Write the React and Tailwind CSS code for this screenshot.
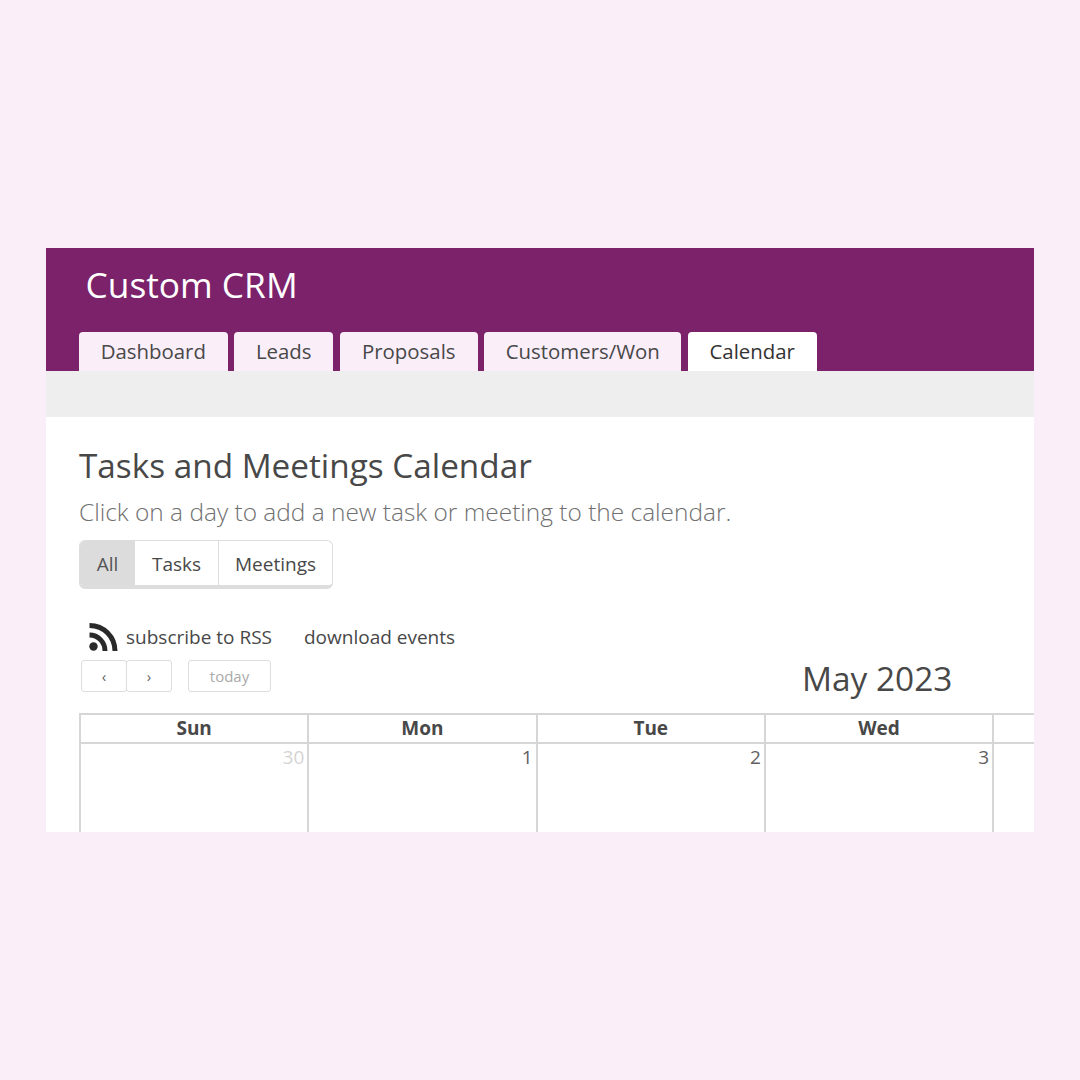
const tabs = [
  { label: "Dashboard", w: "w-[149px]" },
  { label: "Leads", w: "w-[99px]" },
  { label: "Proposals", w: "w-[138px]" },
  { label: "Customers/Won", w: "w-[197px]" },
  { label: "Calendar", w: "w-[129px]", active: true },
];

const days = [
  { name: "Sun", num: "30", muted: true },
  { name: "Mon", num: "1" },
  { name: "Tue", num: "2" },
  { name: "Wed", num: "3" },
  { name: "", num: "" },
];

function Rss() {
  return (
    <svg width="30" height="30" viewBox="0 0 30 30" className="shrink-0">
      <circle cx="5.5" cy="24.5" r="4.2" fill="#2a2a2a" />
      <path d="M1.5 13 C10 13 17 20 17 29" fill="none" stroke="#2a2a2a" strokeWidth="5" />
      <path d="M1.5 3.5 C16 3.5 27 15 27 29" fill="none" stroke="#2a2a2a" strokeWidth="5" />
    </svg>
  );
}

export default function App() {
  return (
    <div className="min-h-[1080px] bg-[#faeef9] pt-[248px] px-[46px] font-['Open_Sans',sans-serif] text-[#484848]">
      <div className="w-[988px] h-[584px] bg-white overflow-hidden">
        <div className="h-[123px] bg-[#7b226b] flex flex-col">
          <div className="h-[84px] pl-[39.5px] pt-[13px] text-[35.3px] leading-[46px] text-white">Custom CRM</div>
          <div className="flex gap-[6.5px] pl-[32.75px]">
            {tabs.map((t) => (
              <div
                key={t.label}
                className={`${t.w} h-[39px] rounded-t-[4px] flex items-center justify-center text-[20.4px] ${t.active ? "bg-white text-[#333333]" : "bg-[#faeef9] text-[#484848]"}`}
              >
                {t.label}
              </div>
            ))}
          </div>
        </div>
        <div className="h-[46px] bg-[#eeeeee]" />
        <div className="pl-[33px]">
          <h1 className="mt-[23px] text-[33.3px] leading-[50px] text-[#484848]">Tasks and Meetings Calendar</h1>
          <p className="mt-[2px] text-[24.45px] leading-[40px] font-light text-[#707070]">
            Click on a day to add a new task or meeting to the calendar.
          </p>
          <div className="mt-[8px] flex w-[254px] h-[49px] rounded-[6px] border border-[#dddddd] border-b-[4px] overflow-hidden text-[19px]">
            <div className="w-[55px] bg-[#dcdcdc] flex items-center justify-center pt-[2px] text-[#555555]">All</div>
            <div className="w-[84px] border-r border-[#dddddd] flex items-center justify-center pt-[2px]">Tasks</div>
            <div className="flex-1 flex items-center justify-center pt-[2px]">Meetings</div>
          </div>
          <div className="mt-[31px] h-[34px] flex items-center pl-[9px] text-[19px]">
            <Rss />
            <span className="ml-[8px]">subscribe to RSS</span>
            <span className="ml-[32px]">download events</span>
          </div>
          <div className="flex h-[59px]">
            <div className="flex mt-[6px] ml-[2px] h-[32px] text-[15px] text-[#666666]">
              <div className="w-[46px] rounded-[3px] border border-[#dddddd] flex items-center justify-center">‹</div>
              <div className="w-[46px] -ml-[1px] rounded-[3px] border border-[#dddddd] flex items-center justify-center">›</div>
              <div className="ml-[16px] w-[83px] rounded-[3px] border border-[#dddddd] flex items-center justify-center text-[#aaaaaa]">today</div>
            </div>
            <div className="ml-[531px] text-[33.4px] leading-[46px] mt-[1px]">May 2023</div>
          </div>
          <div className="flex w-[1145px] border-t-2 border-l-2 border-[#d6d6d6]">
            {days.map((d, i) => (
              <div key={i} className="w-[228.3px] shrink-0 border-r-2 border-[#d6d6d6]">
                <div className="h-[29px] border-b-2 border-[#d6d6d6] flex items-center justify-center text-[19px] font-bold">{d.name}</div>
                <div className={`h-[100px] pr-[3px] pt-[1px] text-right text-[19px] leading-[24px] ${d.muted ? "text-[#d4d4d4]" : "text-[#606060]"}`}>{d.num}</div>
              </div>
            ))}
          </div>
        </div>
      </div>
    </div>
  );
}
